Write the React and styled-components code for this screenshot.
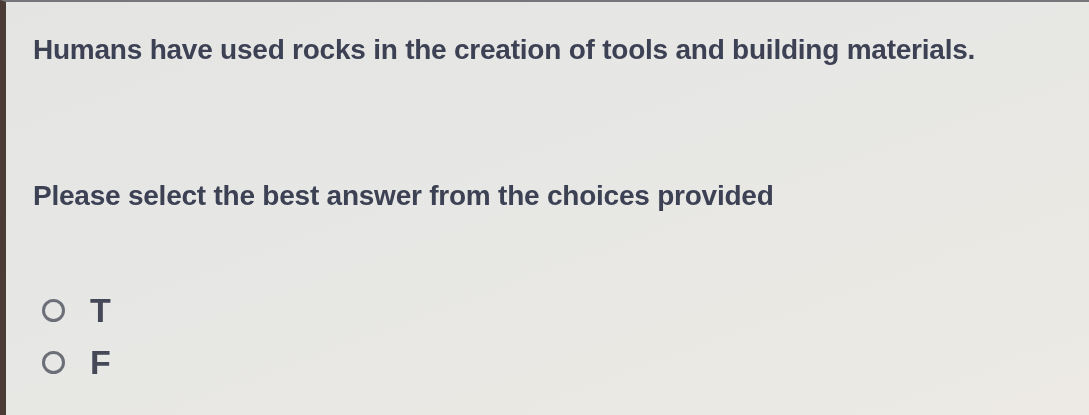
import React from "react";
import styled, { createGlobalStyle } from "styled-components";

const Global = createGlobalStyle`
  html, body { margin: 0; padding: 0; }
  body { background: #e6e6e3; }
`;

const Screen = styled.div`
  width: 1089px;
  height: 415px;
  box-sizing: border-box;
  border-left: 6px solid #4a3b36;
  border-top: 2px solid #77767a;
  background: linear-gradient(160deg, #e4e4e3 0%, #e7e7e5 45%, #eceae3 100%);
  padding: 33px 0 0 27px;
  font-family: "Liberation Sans", Arial, sans-serif;
  color: #3d4154;
  overflow: hidden;
  display: flex;
  flex-direction: column;
`;

const Question = styled.p`
  margin: 0;
  font-size: 28px;
  font-weight: 700;
  line-height: 30px;
  letter-spacing: -0.23px;
  filter: blur(0.45px);
`;

const Prompt = styled(Question)`
  margin-top: 116px;
`;

const Choices = styled.div`
  margin-top: 86px;
  display: flex;
  flex-direction: column;
  gap: 26px;
  padding-left: 9px;
`;

const Choice = styled.label`
  display: flex;
  align-items: center;
  gap: 25px;
  height: 26px;
  font-size: 34px;
  font-weight: 700;
  color: #444857;
  filter: blur(0.5px);
`;

const Radio = styled.span`
  width: 17px;
  height: 17px;
  border: 3px solid #6d6f78;
  border-radius: 50%;
  flex: none;
`;

export default function App() {
  return (
    <>
      <Global />
      <Screen>
        <Question>Humans have used rocks in the creation of tools and building materials.</Question>
        <Prompt>Please select the best answer from the choices provided</Prompt>
        <Choices>
          <Choice><Radio />T</Choice>
          <Choice><Radio />F</Choice>
        </Choices>
      </Screen>
    </>
  );
}
